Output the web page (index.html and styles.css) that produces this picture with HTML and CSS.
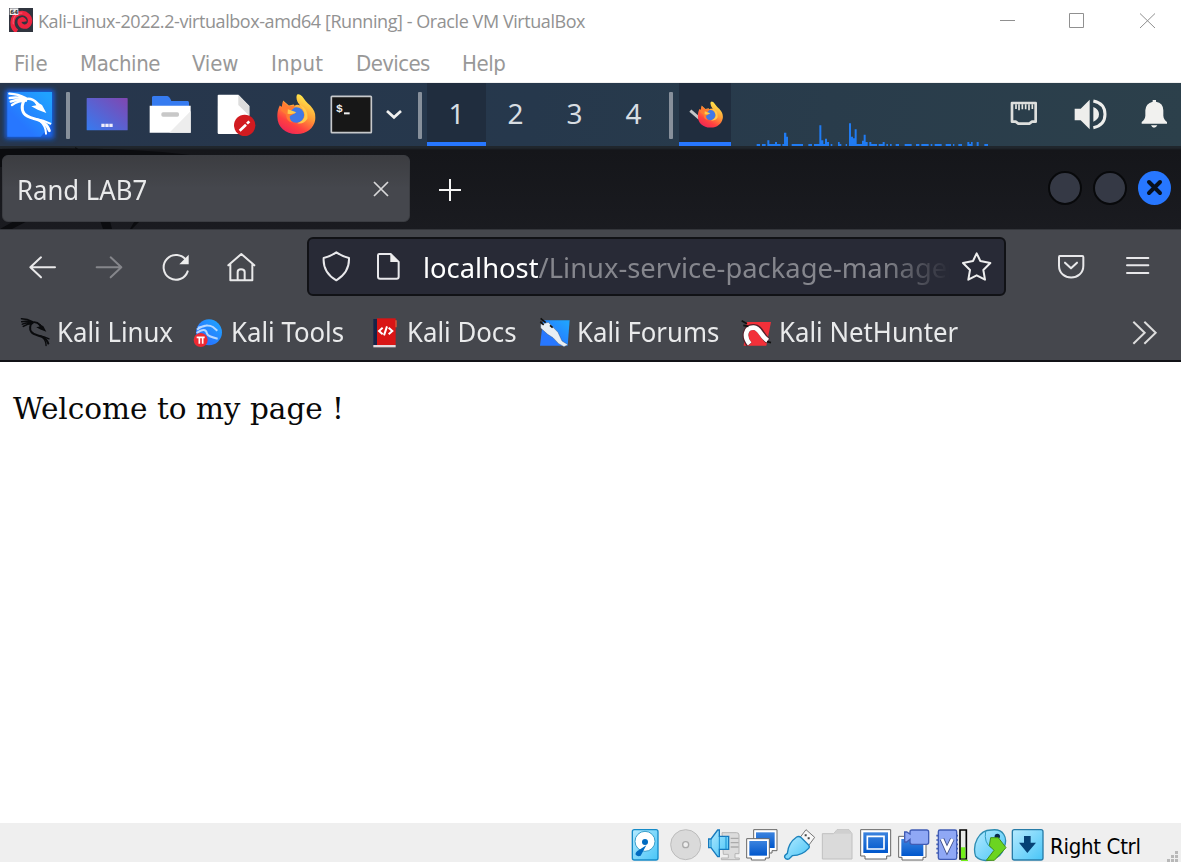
FILE: index.html
```html
<!DOCTYPE html>
<html lang="en">
<head>
<meta charset="utf-8">
<title>Kali-Linux-2022.2-virtualbox-amd64 [Running] - Oracle VM VirtualBox</title>
<link rel="stylesheet" href="styles.css">
</head>
<body>
<svg class="defs" aria-hidden="true">
  <defs>
    <symbol id="dragon" viewBox="20 35 140 135">
      <g fill="none" stroke="currentColor" stroke-linecap="round" stroke-linejoin="round">
        <path stroke-width="7" d="M28 41Q55 42 77 54M29 54Q50 50 76 56M32 65Q52 57 76 59M36 75Q55 62 78 62"/>
        <path stroke-width="9" d="M76 56C66 68 63 88 72 100C83 115 104 114 120 122C135 129 143 136 148 152"/>
        <path stroke-width="6" d="M108 117Q130 121 151 131M120 122Q138 138 138 161"/>
        <path stroke-width="8" d="M78 57Q96 53 112 70"/>
      </g>
      <path fill="currentColor" d="M99 59L126 75L139 99L113 89L94 79L109 76Z"/>
    </symbol>
    <linearGradient id="blue" x1="0" y1="1" x2="1" y2="0"><stop offset=".3" stop-color="#2777ff"/><stop offset=".9" stop-color="#20a2ff"/></linearGradient>
    <linearGradient id="desk" x1="0" y1="1" x2="1" y2="0"><stop stop-color="#367bf0"/><stop offset="1" stop-color="#8146b0"/></linearGradient>
    <linearGradient id="fire" x1=".8" y1="0" x2=".25" y2="1"><stop offset=".1" stop-color="#ffe34a"/><stop offset=".45" stop-color="#ff9a36"/><stop offset=".75" stop-color="#ff4040"/><stop offset="1" stop-color="#ee2458"/></linearGradient>
    <linearGradient id="cyan" x1="0" y1="0" x2="1" y2="1"><stop stop-color="#b5eaff"/><stop offset="1" stop-color="#48c5f7"/></linearGradient>
    <linearGradient id="screen" x1="0" y1="0" x2="0" y2="1"><stop stop-color="#3b83de"/><stop offset="1" stop-color="#0057cc"/></linearGradient>
    <filter id="glow" x="-30%" y="-30%" width="160%" height="160%"><feGaussianBlur stdDeviation="8"/></filter>
    <symbol id="firefox" viewBox="0 0 114 120">
      <path fill="url(#fire)" d="M58 5C60-2 68 1 74 7C81 16 87 26 98 34C111 48 115 61 113 76C108 103 85 119 58 118C27 119 1 99 1 67C1 51 4 43 8 34L16 39L18 19L35 34L49 31Q54 35 45 44Q54 27 68 34Q55 18 58 5Z"/>
      <circle cx="57" cy="62" r="23" fill="#4078e6"/>
      <path fill="#ff7b32" d="M17 22L34 36L53 34L49 43L38 52L54 56L38 65Q36 75 46 84Q27 81 27 61L12 49Z"/>
      <path fill="#ffca4b" d="M32 45L57 54Q50 61 31 58ZM65 31Q92 42 90 72Q79 90 60 86Q80 79 82 62Q79 43 65 31Z"/>
    </symbol>
  </defs>
</svg>

<header class="titlebar">
  <svg class="app-icon" viewBox="0 0 72 72"><path fill="#30353f" d="M0 0H72V72H0Z"/><path fill="none" stroke="#ee2440" stroke-width="13" d="M24 70C6 59 5 25 29 17C52 9 69 30 61 47C54 61 35 57 32 44C30 32 45 30 47 41"/><path fill="none" stroke="#ff8292" stroke-width="2" d="M13 49C9 29 22 14 40 15"/><path fill="#eee" d="M2 1H28V21H2Z"/><text class="bit" x="4" y="17">64</text></svg>
  <span class="title">Kali-Linux-2022.2-virtualbox-amd64 [Running] - Oracle VM VirtualBox</span>
  <svg class="window-buttons" viewBox="0 0 190 42"><path fill="none" stroke="#909090" d="M9 20.5H24M78.500 13.500H92.500V27.500H78.500ZM149 13.500L164 28M164 13.500L149 28"/></svg>
</header>

<nav class="menubar">
  <span class="m-file">File</span><span class="m-machine">Machine</span><span class="m-view">View</span><span class="m-input">Input</span><span class="m-devices">Devices</span><span class="m-help">Help</span>
</nav>

<section class="panel">
  <svg width="60" height="63" viewBox="0 9 180 189"><path filter="url(#glow)" fill="#1268ff" opacity=".9" d="M16 30H162V176H16Z"/><path fill="url(#blue)" d="M22 36H156V130L122 170H22Z"/><g color="#fff"><use href="#dragon" x="20" y="35" width="140" height="135"/></g></svg>
  <i class="sep s1"></i>
  <svg width="64" height="63" viewBox="228 9 192 189"><rect x="260" y="54" width="123" height="97" rx="2" fill="url(#desk)"/><path fill="#f0edfa" d="M304 131H314V141H304ZM316 131H326V141H316ZM328 131H338V141H328Z"/></svg>
  <svg width="65" height="63" viewBox="420 9 195 189"><path fill="#367bf0" d="M456 52Q457 48 461 48H502Q509 49 514 63H563Q567 64 567 68V80H456Z"/><path fill="#fff" d="M449 77H572V158H449Z"/><path fill="#ededed" d="M572 93V158H508Z"/><rect x="484" y="97" width="53" height="13" rx="5" fill="#c8c8c8"/></svg>
  <svg width="60" height="63" viewBox="615 9 180 189"><path fill="#fff" d="M656 44H715L748 78V162H656Q653 162 653 158V47Q653 44 656 44Z"/><path fill="#ddd" d="M715 44V75L748 107V78Z"/><circle cx="734" cy="136" r="32" fill="#d21b20"/><path stroke="#fff" stroke-width="8" d="M719 152L738 134M741 131L748 124"/></svg>
  <svg width="60" height="63" viewBox="795 9 180 189"><use href="#firefox" x="831" y="42" width="116" height="122"/></svg>
  <svg width="53" height="63" viewBox="75 9 159 189"><rect x="94" y="49" width="120" height="109" rx="2" fill="#171717" stroke="#c7c9cb" stroke-width="5"/><text class="prompt" x="108" y="95">$</text><path fill="#eee" d="M132 97H149V103H132Z"/></svg>
  <svg width="34" height="63" viewBox="234 9 102 189"><path fill="none" stroke="#f0f0ef" stroke-width="8" d="M261 93L282 112L303 93"/></svg>
  <i class="sep s2"></i>
  <span class="workspace active">1</span><span class="workspace">2</span><span class="workspace">3</span><span class="workspace">4</span>
  <i class="sep s3"></i>
  <span class="task"><svg width="52" height="63" viewBox="57 9 156 189"><path stroke="#c4c6c8" stroke-width="9" d="M91 92L118 115"/><use href="#firefox" x="110" y="64" width="82" height="80"/></svg></span>
  <svg width="269" height="63" viewBox="213 9 807 189"><path fill="#207bf2" d="M290 192h10v6h-10zM306 192h11v6h-11zM322 181h6v11h17v-6h6v6h11v6h-40zM367 192h5v-34h7v12h5v28h-17zM395 192h34v6h-34zM445 192h11v6h-11zM462 192h16v-56h6v45h6v11h5v-16h6v10h6v12h-45zM512 192h5v6h-5zM534 186h5v6h5v6h-10zM557 192h4v6h-4zM567 198v-68h6v40h6v5h5v-27h6v44h16v-10h5v-18h6v22h6v12zM628 186h6v6h17v6h-23zM656 192h12v-6h6v12h-18zM679 192h5v6h-5zM690 192h5v6h-5zM707 192h10v6h-10zM734 192h21v6h-21zM768 192h10v6h-10zM784 192h22v6h-22zM812 192h5v6h-5zM824 192h21v6h-21zM857 192h16v6h-16zM879 192h4v6h-4zM895 192h11v6h-11zM922 186h6v6h5v-6h5v12h-16zM950 186h6v12h-6zM973 192h11v6h-11z"/></svg>
  <svg width="50" height="63" viewBox="60 9 150 189"><path fill="none" stroke="#dedfdd" stroke-width="8" stroke-linejoin="round" d="M96 69H167V125H156L148 131H115L107 125H96Z"/><path stroke="#e5e5e2" stroke-width="5" d="M108 73V87M117 73V91M127 73V88M137 73V88M147 73V91M157 73V87"/></svg>
  <svg width="75" height="63" viewBox="210 9 225 189"><path fill="#eeeeec" d="M284 86H302L329 59V148L302 121H284ZM340 81Q357 88 357 103Q357 118 340 125Z"/><path fill="none" stroke="#eeeeec" stroke-width="9" d="M340 63Q375 70 375 103Q375 136 340 143"/></svg>
  <svg width="56" height="63" viewBox="435 9 168 189"><path fill="#f1f1ef" d="M518 60H528V65Q550 69 550 91V107Q551 119 561 126V131H485V126Q495 119 496 107V91Q497 70 518 65ZM513 136H532Q529 143 522 143Q516 143 513 136Z"/></svg>
</section>

<section class="tabbar">
  <svg class="wallpaper" viewBox="0 0 410 83" width="410" height="83"><path fill="#0b0c0f" d="M0 3Q120 0 190 9L0 21ZM75 1L94 11 112 83H130L155 40H175L132 83H103ZM0 83L30 66H45L12 83Z"/></svg>
  <div class="tab"><span class="tab-title">Rand LAB7</span><svg width="18" height="18" viewBox="0 0 18 18"><path stroke="#d8d8d9" stroke-width="1.700" d="M2 2L16 16M16 2L2 16"/></svg></div>
  <svg class="plus" width="24" height="24" viewBox="0 0 24 24"><path stroke="#f4f4f4" stroke-width="2" d="M1 12H23M12 1V23"/></svg>
  <div class="controls"><i></i><i></i><i class="close"><svg width="20" height="20" viewBox="0 0 20 20"><path stroke="#07101d" stroke-width="4" stroke-linecap="round" d="M4 4L15 15M15 4L4 15"/></svg></i></div>
</section>

<section class="toolbar">
  <svg width="307" height="75" viewBox="0 0 921 225"><g fill="none" stroke="#e9e9ea" stroke-width="6" stroke-linejoin="round" stroke-linecap="round"><path d="M165 112H91M123 82L91 112L123 142"/><path stroke="#85868b" d="M290 112H364M332 82L364 112L332 142"/><path d="M559 92A37 37 0 1 0 563 124"/><path d="M685 106L724 72L763 106M691 103V151H757V103M713 151V126Q713 118 723 118Q734 118 734 126V151"/></g><path fill="#eee" d="M566 74V103H538Z"/></svg>
  <div class="address">
    <svg width="98" height="58" viewBox="927 27 294 174"><path fill="none" stroke="#e8e8eb" stroke-width="6" stroke-linejoin="round" d="M1009 67Q1028 80 1047 84Q1049 127 1009 151Q968 127 971 84Q990 80 1009 67ZM1137 72H1172L1196 96V140Q1196 146 1190 146H1140Q1134 146 1134 140V76Q1134 72 1138 72Z"/><path fill="#eee" d="M1171 72V96H1197Z"/></svg>
    <span class="url"><span>localhost<em>/Linux-service-package-manager</em></span></span>
    <svg class="star" width="34" height="58" viewBox="480 27 102 174"><path fill="none" stroke="#eee" stroke-width="6" stroke-linejoin="round" d="M530 70L541 93L571 99L550 120L555 149L530 136L505 149L510 120L489 99L519 93Z"/></svg>
  </div>
  <svg width="175" height="75" viewBox="618 0 525 225"><g fill="none" stroke="#e8e8ea" stroke-width="6" stroke-linecap="round" stroke-linejoin="round"><path d="M779 78H847Q850 78 850 82V107C850 154 777 154 777 107V82Q777 78 779 78ZM795 98L813 115L831 98M981 84H1045M981 106H1045M981 129H1045"/></g></svg>
</section>

<section class="bookmarks">
  <svg width="57" height="56" viewBox="0 225 171 168"><g color="#0a0b0d"><use href="#dragon" x="59" y="262" width="94" height="91"/></g></svg>
  <span class="b1"><b>Kali Linux</b></span>
  <svg width="60" height="56" viewBox="513 225 180 168"><circle cx="627" cy="307" r="39" fill="url(#blue)"/><path fill="none" stroke="#b6d8ff" stroke-width="6" d="M591 299Q618 279 639 291L652 302M590 309Q617 290 621 311Q624 320 653 326M594 293L623 286"/><circle cx="602" cy="330" r="21" fill="#ed2933"/><path fill="none" stroke="#fff" stroke-width="5" d="M590 322H614M598 323V341M608 323V341"/></svg>
  <span class="b2"><b>Kali Tools</b></span>
  <svg width="60" height="56" viewBox="1041 225 180 168"><path fill="#162348" d="M1120 267H1132V345H1120Z"/><path fill="#d91515" d="M1131 265H1187V345H1131Z"/><path fill="#e4dadd" d="M1120 345H1187V352H1120Z"/><path fill="#ee5530" d="M1186 271H1190V292H1186Z"/><path fill="none" stroke="#fff" stroke-width="6" d="M1148 293L1137 303L1148 313M1166 293L1177 303L1166 313M1161 289L1152 316"/></svg>
  <span class="b3"><b>Kali Docs</b></span>
  <svg width="60" height="56" viewBox="111 225 180 168"><path fill="url(#blue)" d="M189 271H269L263 347H180Z"/><path fill="#e8eef3" stroke="#253750" stroke-width="1" d="M182 283L205 277L234 307L246 333L264 344L252 350L236 341L219 323L203 313L182 294Z"/><path stroke="#111" stroke-width="5" d="M182 265L197 278M181 275L191 285M210 286L218 293"/></svg>
  <span class="b4"><b>Kali Forums</b></span>
  <svg width="60" height="56" viewBox="717 225 180 168"><path fill="#f23039" d="M800 276H873L859 347H791Z"/><path fill="none" stroke="#54202b" stroke-width="18" d="M808 344C788 320 796 290 821 291C844 293 841 314 864 333"/><path fill="none" stroke="#fff" stroke-width="14" d="M809 342C790 319 797 292 821 293C841 295 839 315 863 332"/><path stroke="#111" stroke-width="5" d="M785 272L801 281M790 286L805 289M861 335L873 338"/></svg>
  <span class="b5"><b>Kali NetHunter</b></span>
  <svg class="more" width="61" height="56" viewBox="960 225 183 168"><path fill="none" stroke="#ddd" stroke-width="6" d="M1000 275L1034 308L1000 341M1033 275L1067 308L1033 341"/></svg>
</section>

<main><p>Welcome to my page !</p></main>

<footer>
  <svg viewBox="24 9 114 117"><rect x="37" y="29" width="77" height="91" rx="6" fill="url(#cyan)" stroke="#168bc8" stroke-width="4"/><circle cx="75" cy="64" r="30" fill="#fff" stroke="#3a9fcb" stroke-width="3"/><circle cx="75" cy="66" r="9" fill="#006ac0"/><path fill="#006ac0" d="M79 76L62 107Q53 111 47 104Q45 96 57 90Z"/></svg>
  <svg viewBox="138 9 114 117"><circle cx="197" cy="74" r="45" fill="#dadada" stroke="#bcbcbc" stroke-width="3"/><circle cx="197" cy="74" r="9" fill="#eee" stroke="#aaa" stroke-width="4"/></svg>
  <svg viewBox="252 9 114 117"><path fill="#dcdcdc" stroke="#b5b5b5" stroke-width="3" d="M306 38H350Q357 38 357 45V101H345V114H358V119H304V114H325V103H310Z"/><path stroke="#aaa" stroke-width="4" d="M332 55H356M332 68H356M332 81H356"/><path fill="url(#cyan)" stroke="#1679bd" stroke-width="4" d="M266 57H273L293 30H298V49H326V88H298V110H293L273 83H266Z"/><path stroke="#168dcf" stroke-width="3" d="M273 57V83M298 49V88M318 49V88"/></svg>
  <svg viewBox="366 9 114 117"><path fill="#fff" stroke="#666" stroke-width="3" d="M401 29H471V92H456V99H420V92H401Z"/><path fill="url(#screen)" d="M408 37H464V84H408Z"/><path fill="#fff" stroke="#666" stroke-width="3" d="M380 56H448V114H436V120H394V114H380Z"/><path fill="url(#screen)" d="M388 63H441V107H388Z"/></svg>
  <svg viewBox="480 9 114 117"><path fill="#f7f7f7" stroke="#777" stroke-width="3" d="M558 29L584 52L564 79L539 54Z"/><path fill="#444" d="M554 43h6v6h-6zM563 52h6v6h-6z"/><path fill="url(#cyan)" stroke="#1c82bc" stroke-width="4" d="M530 51Q537 47 544 53L565 74Q571 81 565 86Q548 106 517 107L507 117Q499 120 494 112Q492 106 502 100Q505 68 530 51Z"/></svg>
  <svg viewBox="594 9 114 117"><path fill="#dadada" stroke="#c0c0c0" stroke-width="3" d="M607 41H641L651 29H687L696 41V117H607Z"/><path fill="#cfcfcf" d="M641 41L651 29H687L696 41Z"/></svg>
  <svg viewBox="708 9 114 117"><path fill="#fff" stroke="#666" stroke-width="3" d="M722 29H812V108H800V117H735V108H722Z"/><path fill="url(#screen)" d="M730 37H804V99H730Z"/><path fill="none" stroke="#fff" stroke-width="5" d="M742 49H792V87H742Z"/></svg>
  <svg viewBox="12 9 114 117"><path fill="#fff" stroke="#666" stroke-width="3" d="M26 49H108V112H99V120H36V112H26Z"/><path fill="url(#screen)" d="M34 57H100V108H34Z"/><path fill="#8fa8f5" stroke="#405cb5" stroke-width="4" d="M44 36H50L60 42V36Q60 30 66 30H110Q116 30 116 36V67Q116 73 110 73H66Q60 73 60 67V58L50 66H44Z"/></svg>
  <svg viewBox="126 9 114 117"><path fill="none" stroke="#405cb5" stroke-width="5" d="M139 47H204M139 60H204M139 73H204M139 86H204M139 99H204"/><rect x="145" y="30" width="55" height="88" rx="5" fill="#8fa8f5" stroke="#405cb5" stroke-width="4"/><path fill="none" stroke="#405088" stroke-width="14" d="M156 57L171 90L187 57"/><path fill="none" stroke="#fff" stroke-width="9" d="M156 57L171 90L187 57"/><path fill="#e8eae8" stroke="#000" stroke-width="5" d="M210 30H229V117H210Z"/><path fill="#72ef19" d="M213 82H226V115H213ZM213 119H234V123H213Z"/></svg>
  <svg viewBox="240 9 114 117"><path fill="url(#cyan)" stroke="#2d8bb0" stroke-width="4" d="M257 109C246 75 265 29 305 30C340 25 355 53 342 84C333 119 280 133 257 109Z"/><path fill="none" stroke="#2d9bc0" stroke-width="3" d="M287 34Q281 68 304 84"/><circle cx="322" cy="49" r="8" fill="#08294d"/><path fill="#6bd421" stroke="#449016" stroke-width="3" d="M302 53H325L348 83L313 121H289L312 91L298 77Z"/></svg>
  <svg viewBox="354 9 114 117"><rect x="367" y="29" width="92" height="91" rx="6" fill="url(#cyan)" stroke="#287ca8" stroke-width="4"/><path fill="#064175" d="M402 48H422V68H438L412 99L387 68H402Z"/></svg>
  <span class="host">Right Ctrl</span>
  <svg class="grip" width="12" height="12" viewBox="0 0 12 12"><path fill="#b8b8b8" d="M8 0h3v3H8zM4 4h3v3H4zM8 4h3v3H8zM0 8h3v3H0zM4 8h3v3H4zM8 8h3v3H8z"/></svg>
</footer>
</body>
</html>
```
FILE: styles.css
```css
* { box-sizing: border-box; }
body { margin: 0; width: 1181px; height: 862px; overflow: hidden; display: flex; flex-direction: column; background: #fff; font-family: "Noto Sans", sans-serif; }
body > * { flex-shrink: 0; }
svg { display: block; flex: none; }
.defs { position: absolute; width: 0; height: 0; }
.titlebar { height: 42px; display: flex; align-items: center; padding-left: 9px; color: #929292; }
.app-icon { width: 24px; height: 24px; margin-top: -2px; }
.bit { font: bold 17px "DejaVu Sans", sans-serif; fill: #333; }
.title { font: 18px/42px "Open Sans", sans-serif; margin-left: 5px; width: 600px; white-space: nowrap; letter-spacing: -.43px; }
.window-buttons { width: 190px; height: 42px; margin-left: auto; }
.menubar { height: 41px; display: flex; color: #989898; font: 22px/43px "DejaVu Sans Condensed", "DejaVu Sans", sans-serif; font-stretch: condensed; padding-left: 14px; border-bottom: 1px solid #f0f0f0; letter-spacing: -.4px; }
.menubar span { white-space: nowrap; }
.m-file { width: 66px; letter-spacing: .2px; } .m-machine { width: 112px; } .m-view { width: 79px; letter-spacing: -.2px; } .m-input { width: 85px; letter-spacing: .2px; } .m-devices { width: 106px; letter-spacing: -.6px; }
.panel { height: 63px; display: flex; background: linear-gradient(100deg, #27364c 5%, #26384c 45%, #293c4b 70%, #2c404b); }
.sep { width: 4px; height: 47px; margin: 9px 6px; background: #87909b; border-radius: 1px; flex: none; }
.s2 { margin: 9px 5px 0 6px; }
.workspace { width: 59px; height: 63px; color: #d7dde2; font-size: 28px; line-height: 61px; text-align: center; flex: none; }
.workspace.active, .task { background: #202d3e; border-bottom: 4px solid #2777ff; }
.task { width: 52px; height: 63px; overflow: hidden; flex: none; }
.prompt { font: bold 34px "Liberation Mono", monospace; fill: #eee; }
.tabbar { height: 83px; display: flex; padding: 9px 10px 0 2px; background: linear-gradient(#20262c 0 2px, #15161a 4px, #1a1b20); position: relative; }
.wallpaper { position: absolute; left: 0; top: 0; }
.tab { width: 408px; height: 67px; border-radius: 6px; background: linear-gradient(#3c3d41, #45474d 50%); border: 1px solid #3b3d42; position: relative; display: flex; align-items: center; justify-content: space-between; padding: 0 19px 0 14px; }
.tab-title { font-size: 28px; line-height: 65px; color: #e9eaeb; transform: scaleX(.918); transform-origin: left; white-space: nowrap; padding-top: 1px; }
.plus { margin: 23px 0 0 28px; }
.controls { margin-left: auto; display: flex; gap: 11px; padding-top: 16px; }
.controls i { width: 34px; height: 34px; border-radius: 50%; border: 2px solid #08090b; background: #353945; }
.controls .close { width: 33px; background: #2777ff; border: 0; display: grid; place-items: center; }
.toolbar { height: 76px; display: flex; background: #45474d; border-top: 1px solid #34363b; align-items: flex-start; }
.address { width: 699px; height: 59px; margin-top: 7px; border: 2px solid #111216; border-radius: 6px; background: #282a36; display: flex; overflow: hidden; }
.url { width: 537px; margin-left: 16px; overflow: hidden; height: 56px; font-size: 28px; line-height: 56px; color: #fff; -webkit-mask-image: linear-gradient(90deg, #000 460px, transparent 527px); }
.url span { display: block; width: 650px; transform: scaleX(.977); transform-origin: left; white-space: nowrap; }
.url em { font-style: normal; color: #85868d; }
.bookmarks { height: 57px; display: flex; background: #45474d; border-bottom: 2px solid #111216; }
.bookmarks > span { height: 55px; flex: none; }
.bookmarks b { display: inline-block; font-size: 28px; line-height: 52px; font-weight: 400; color: #e9eaeb; transform: scaleX(.92); transform-origin: left; white-space: nowrap; }
.b1 { width: 114px; } .b2 { width: 116px; } .b3 { width: 110px; } .b4 { width: 142px; } .b5 { width: 341px; }
main { height: 461px; background: #fff; padding: 29px 13px; color: #090909; font: 29.500px/36px "DejaVu Serif", serif; }
main p { margin: 0; }
footer { height: 39px; display: flex; padding-left: 628px; background: #efefef; align-items: stretch; }
footer > svg { width: 38px; height: 39px; }
.host { font: 22px/47px "DejaVu Sans Condensed", "DejaVu Sans", sans-serif; font-stretch: condensed; color: #000; margin-left: 4px; width: 100px; white-space: nowrap; letter-spacing: -.3px; }
footer .grip { width: 12px; height: 12px; margin: 28px 2px 0 auto; }
```
